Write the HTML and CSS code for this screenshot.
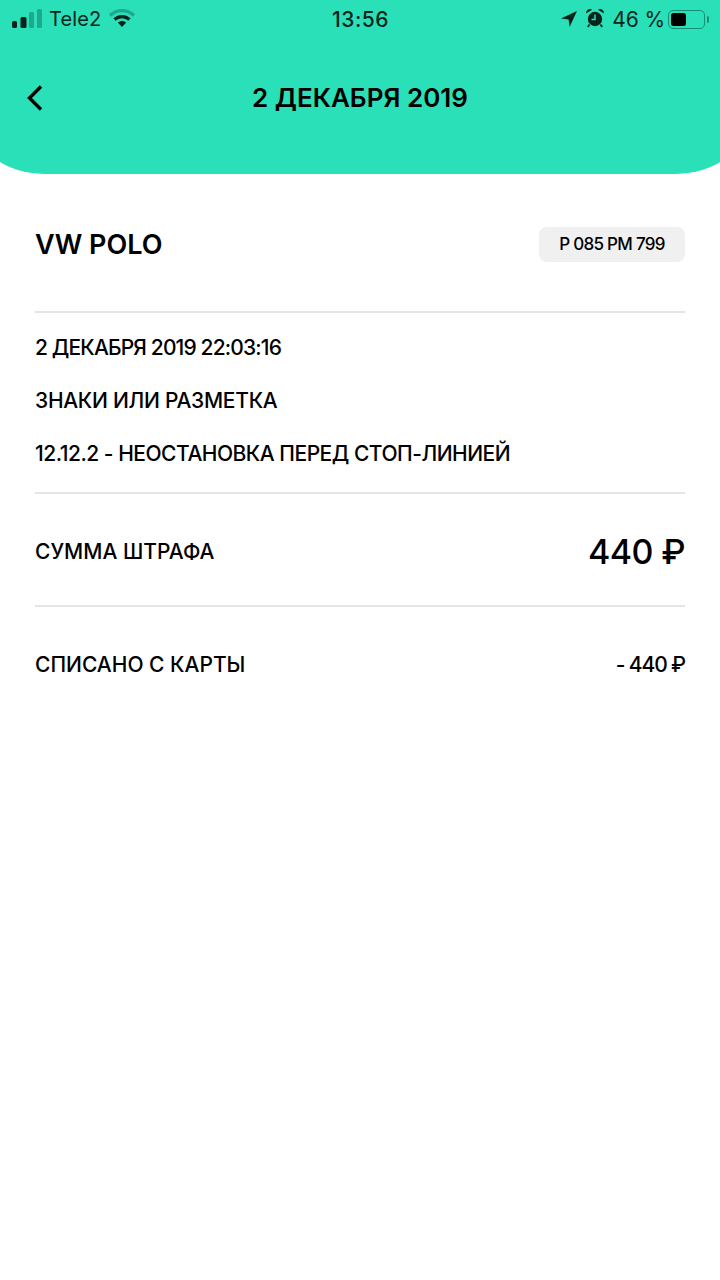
FILE: index.html
```html
<!DOCTYPE html>
<html lang="ru">
<head>
<meta charset="utf-8">
<title>2 декабря 2019</title>
<link rel="stylesheet" href="styles.css">
</head>
<body>
<header class="header">
  <div class="status">
    <div class="status-left">
      <svg class="signal" width="30" height="20" viewBox="0 0 30 20"><rect x="0" y="12" width="5" height="7" rx="1.5" fill="#06241c"/><rect x="8.5" y="8" width="6" height="11" rx="1.5" fill="#06241c"/><rect x="17" y="3" width="5" height="16" rx="1.5" fill="#1fa98c"/><rect x="25" y="0" width="5" height="19" rx="1.5" fill="#1fa98c"/></svg>
      <span class="carrier">Tele2</span>
      <svg class="wifi" width="26" height="20" viewBox="0 0 26 20"><path d="M1 7.5C8 1 18 1 25 7.5" fill="none" stroke="#1fa98c" stroke-width="3.4"/><path d="M5.5 11.5C9.8 7.6 16.2 7.6 20.5 11.5" fill="none" stroke="#06241c" stroke-width="3.2"/><path d="M8.8 14.6C11.3 12.4 14.7 12.4 17.2 14.6L13 19Z" fill="#06241c"/></svg>
    </div>
    <span class="clock">13:56</span>
    <div class="status-right">
      <svg width="16" height="16" viewBox="0 0 16 16"><path d="M16 0L0 7.4L7.6 8.4L8.6 16Z" fill="#06241c"/></svg>
      <svg class="alarm" width="18" height="20" viewBox="0 0 18 20"><circle cx="9" cy="11" r="7.2" fill="#06241c"/><path d="M3.5 16.5L1.8 19M14.5 16.5L16.2 19" stroke="#06241c" stroke-width="1.8"/><path d="M9 6.5V11.5H5.5" fill="none" stroke="#2ae0b8" stroke-width="1.5"/><path d="M0 5.5C0 1.5 3.8 0 6 1.8ZM18 5.5C18 1.5 14.2 0 12 1.8Z" fill="#06241c"/></svg>
      <span class="percent">46 %</span>
      <div class="battery"><div class="battery-level"></div></div>
      <div class="battery-cap"></div>
    </div>
  </div>
  <div class="nav">
    <svg class="back" width="16" height="26" viewBox="0 0 16 26"><path d="M14 1.5L2.5 13L14 24.5" fill="none" stroke="#000" stroke-width="3.4"/></svg>
    <h1 class="title">2 ДЕКАБРЯ 2019</h1>
  </div>
</header>
<main class="content">
  <section class="car">
    <h2 class="car-name">VW POLO</h2>
    <div class="plate">Р 085 РМ 799</div>
  </section>
  <section class="details">
    <p class="date">2 ДЕКАБРЯ 2019 22:03:16</p>
    <p class="kind">ЗНАКИ ИЛИ РАЗМЕТКА</p>
    <p class="rule">12.12.2 - НЕОСТАНОВКА ПЕРЕД СТОП-ЛИНИЕЙ</p>
  </section>
  <section class="row row-sum">
    <span>СУММА ШТРАФА</span>
    <span class="sum">440 ₽</span>
  </section>
  <section class="row row-paid">
    <span>СПИСАНО С КАРТЫ</span>
    <span class="paid">- 440 ₽</span>
  </section>
</main>
</body>
</html>
```
FILE: styles.css
```css
* { box-sizing: border-box; }
html, body { margin: 0; padding: 0; background: #fff; }
body { width: 720px; height: 1280px; overflow: hidden; color: #000; font-family: "Inter", "Noto Sans", sans-serif; }
p, h1, h2 { margin: 0; font-weight: 500; }

.header { width: 780px; height: 174px; margin: 0 -30px; padding: 0 30px; background: #2ae0b8; border-radius: 0 0 75px 75px / 0 0 60px 60px; }
.status { height: 38px; padding: 0 11px 0 12px; display: grid; grid-template-columns: 1fr auto 1fr; align-items: center; color: #06241c; }
.status-left { display: flex; align-items: center; }
.carrier { margin-left: 7px; font-size: 20px; letter-spacing: 0.1px; }
.wifi { margin-left: 8px; margin-top: -2px; }
.clock { font-size: 21px; font-weight: 500; letter-spacing: 0.5px; }
.status-right { display: flex; align-items: center; justify-content: flex-end; }
.alarm { margin-left: 9px; margin-top: -2px; }
.percent { margin-left: 8px; font-size: 21px; letter-spacing: -0.1px; }
.battery { margin-left: 3px; width: 37px; height: 19px; border: 1.5px solid #149075; border-radius: 5px; padding: 2px; }
.battery-level { width: 15px; height: 100%; background: #000; border-radius: 2.5px; }
.battery-cap { width: 2px; height: 7px; margin-left: 2px; background: #149075; border-radius: 0 2px 2px 0; }

.nav { height: 120px; padding: 0 27px; position: relative; display: flex; align-items: center; }
.title { position: absolute; left: 0; right: 0; text-align: center; font-size: 26px; line-height: 40px; font-weight: 600; }

.content { padding: 0 35px; }
.car { height: 139px; display: flex; justify-content: space-between; align-items: flex-start; padding-top: 53px; border-bottom: 2px solid #e5e5e5; }
.car-name { font-size: 27px; line-height: 36px; font-weight: 600; }
.plate { width: 146px; height: 35px; background: #f0f0f0; border-radius: 8px; text-align: center; font-size: 17px; line-height: 35px; font-weight: 500; letter-spacing: -0.7px; }
.details { height: 181px; padding-top: 20px; border-bottom: 2px solid #e5e5e5; display: flex; flex-direction: column; gap: 23px; font-size: 21px; line-height: 30px; }
.date { letter-spacing: -0.85px; }
.kind { letter-spacing: -0.28px; }
.rule { letter-spacing: -0.49px; }
.row { display: flex; justify-content: space-between; align-items: center; font-size: 21px; font-weight: 500; }
.row-sum { height: 113px; padding-top: 4px; border-bottom: 2px solid #e5e5e5; }
.sum { font-size: 34px; letter-spacing: -0.6px; }
.row-paid { height: 114px; }
.paid { letter-spacing: -1.1px; }
```
